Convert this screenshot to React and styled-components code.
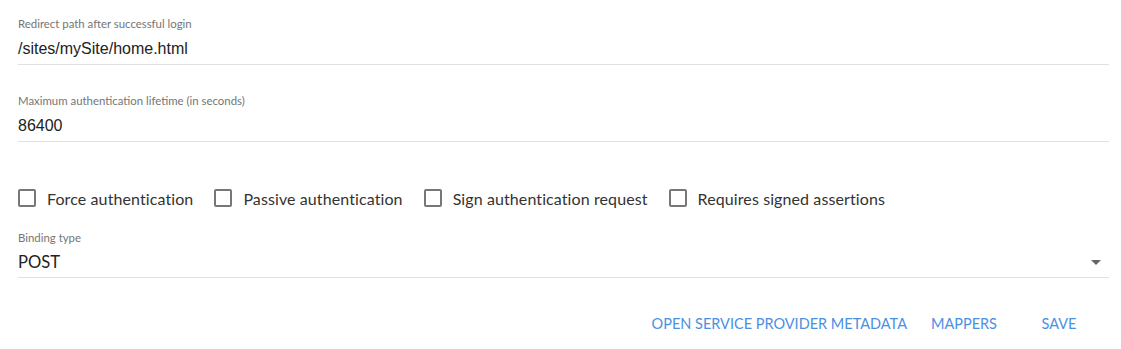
import React from "react";
import styled, { createGlobalStyle } from "styled-components";

const GlobalStyle = createGlobalStyle`
  body {
    margin: 0;
    background: #fff;
    font-family: "Lato", "Noto Sans", sans-serif;
  }
`;

const App = () => {
  return (
    <>
      <GlobalStyle />
      <Page>
        <Field top={16}>
          <Label>Redirect path after successful login</Label>
          <Value>/sites/mySite/home.html</Value>
        </Field>
        <Field top={28}>
          <Label>Maximum authentication lifetime (in seconds)</Label>
          <Value>86400</Value>
        </Field>

        <CheckRow>
          <Check>
            <Box />
            Force authentication
          </Check>
          <Check>
            <Box />
            Passive authentication
          </Check>
          <Check>
            <Box />
            Sign authentication request
          </Check>
          <Check>
            <Box />
            Requires signed assertions
          </Check>
        </CheckRow>

        <Field top={0}>
          <Label>Binding type</Label>
          <Select>
            POST
            <Arrow />
          </Select>
        </Field>

        <Actions>
          <FlatButton>Open service provider metadata</FlatButton>
          <FlatButton>Mappers</FlatButton>
          <FlatButton wide>Save</FlatButton>
        </Actions>
      </Page>
    </>
  );
};

const Page = styled.div`
  display: flex;
  flex-direction: column;
  width: 1121px;
  height: 349px;
  box-sizing: border-box;
  padding: 0 12px 0 18px;
`;

const Field = styled.div`
  display: flex;
  flex-direction: column;
  margin-top: ${(p) => p.top}px;
`;

const Label = styled.div`
  height: 16px;
  line-height: 16px;
  font-size: 11.4px;
  color: #757575;
`;

const Value = styled.div`
  height: 30px;
  padding-top: 2px;
  line-height: 30px;
  font-family: "Liberation Sans", Arial, sans-serif;
  font-size: 16px;
  color: #222;
  border-bottom: 1px solid #e0e0e0;
`;

const Select = styled.div`
  display: flex;
  align-items: center;
  justify-content: space-between;
  height: 30px;
  padding-top: 1px;
  padding-right: 8px;
  font-size: 16.6px;
  color: #222;
  border-bottom: 1px solid #e0e0e0;
`;

const Arrow = styled.span`
  width: 0;
  height: 0;
  border-left: 5px solid transparent;
  border-right: 5px solid transparent;
  border-top: 5px solid #666;
`;

const CheckRow = styled.div`
  display: flex;
  align-items: center;
  gap: 21px;
  margin-top: 45px;
  height: 22px;
  margin-bottom: 21px;
`;

const Check = styled.label`
  display: flex;
  align-items: center;
  gap: 11px;
  font-size: 16px;
  letter-spacing: 0.1px;
  color: #333;
`;

const Box = styled.span`
  width: 18px;
  height: 18px;
  box-sizing: border-box;
  border: 2px solid #777;
  border-radius: 2px;
`;

const Actions = styled.div`
  display: flex;
  justify-content: flex-end;
  margin-top: 27px;
  margin-right: 6px;
`;

const FlatButton = styled.button`
  height: 36px;
  min-width: ${(p) => (p.wide ? "88px" : "0")};
  margin-left: ${(p) => (p.wide ? "6px" : "0")};
  padding: 0 12px;
  border: none;
  background: transparent;
  font-family: "Lato", "Noto Sans", sans-serif;
  font-size: 14.5px;
  text-transform: uppercase;
  color: #4a90e2;
  cursor: pointer;
`;

export default App;
